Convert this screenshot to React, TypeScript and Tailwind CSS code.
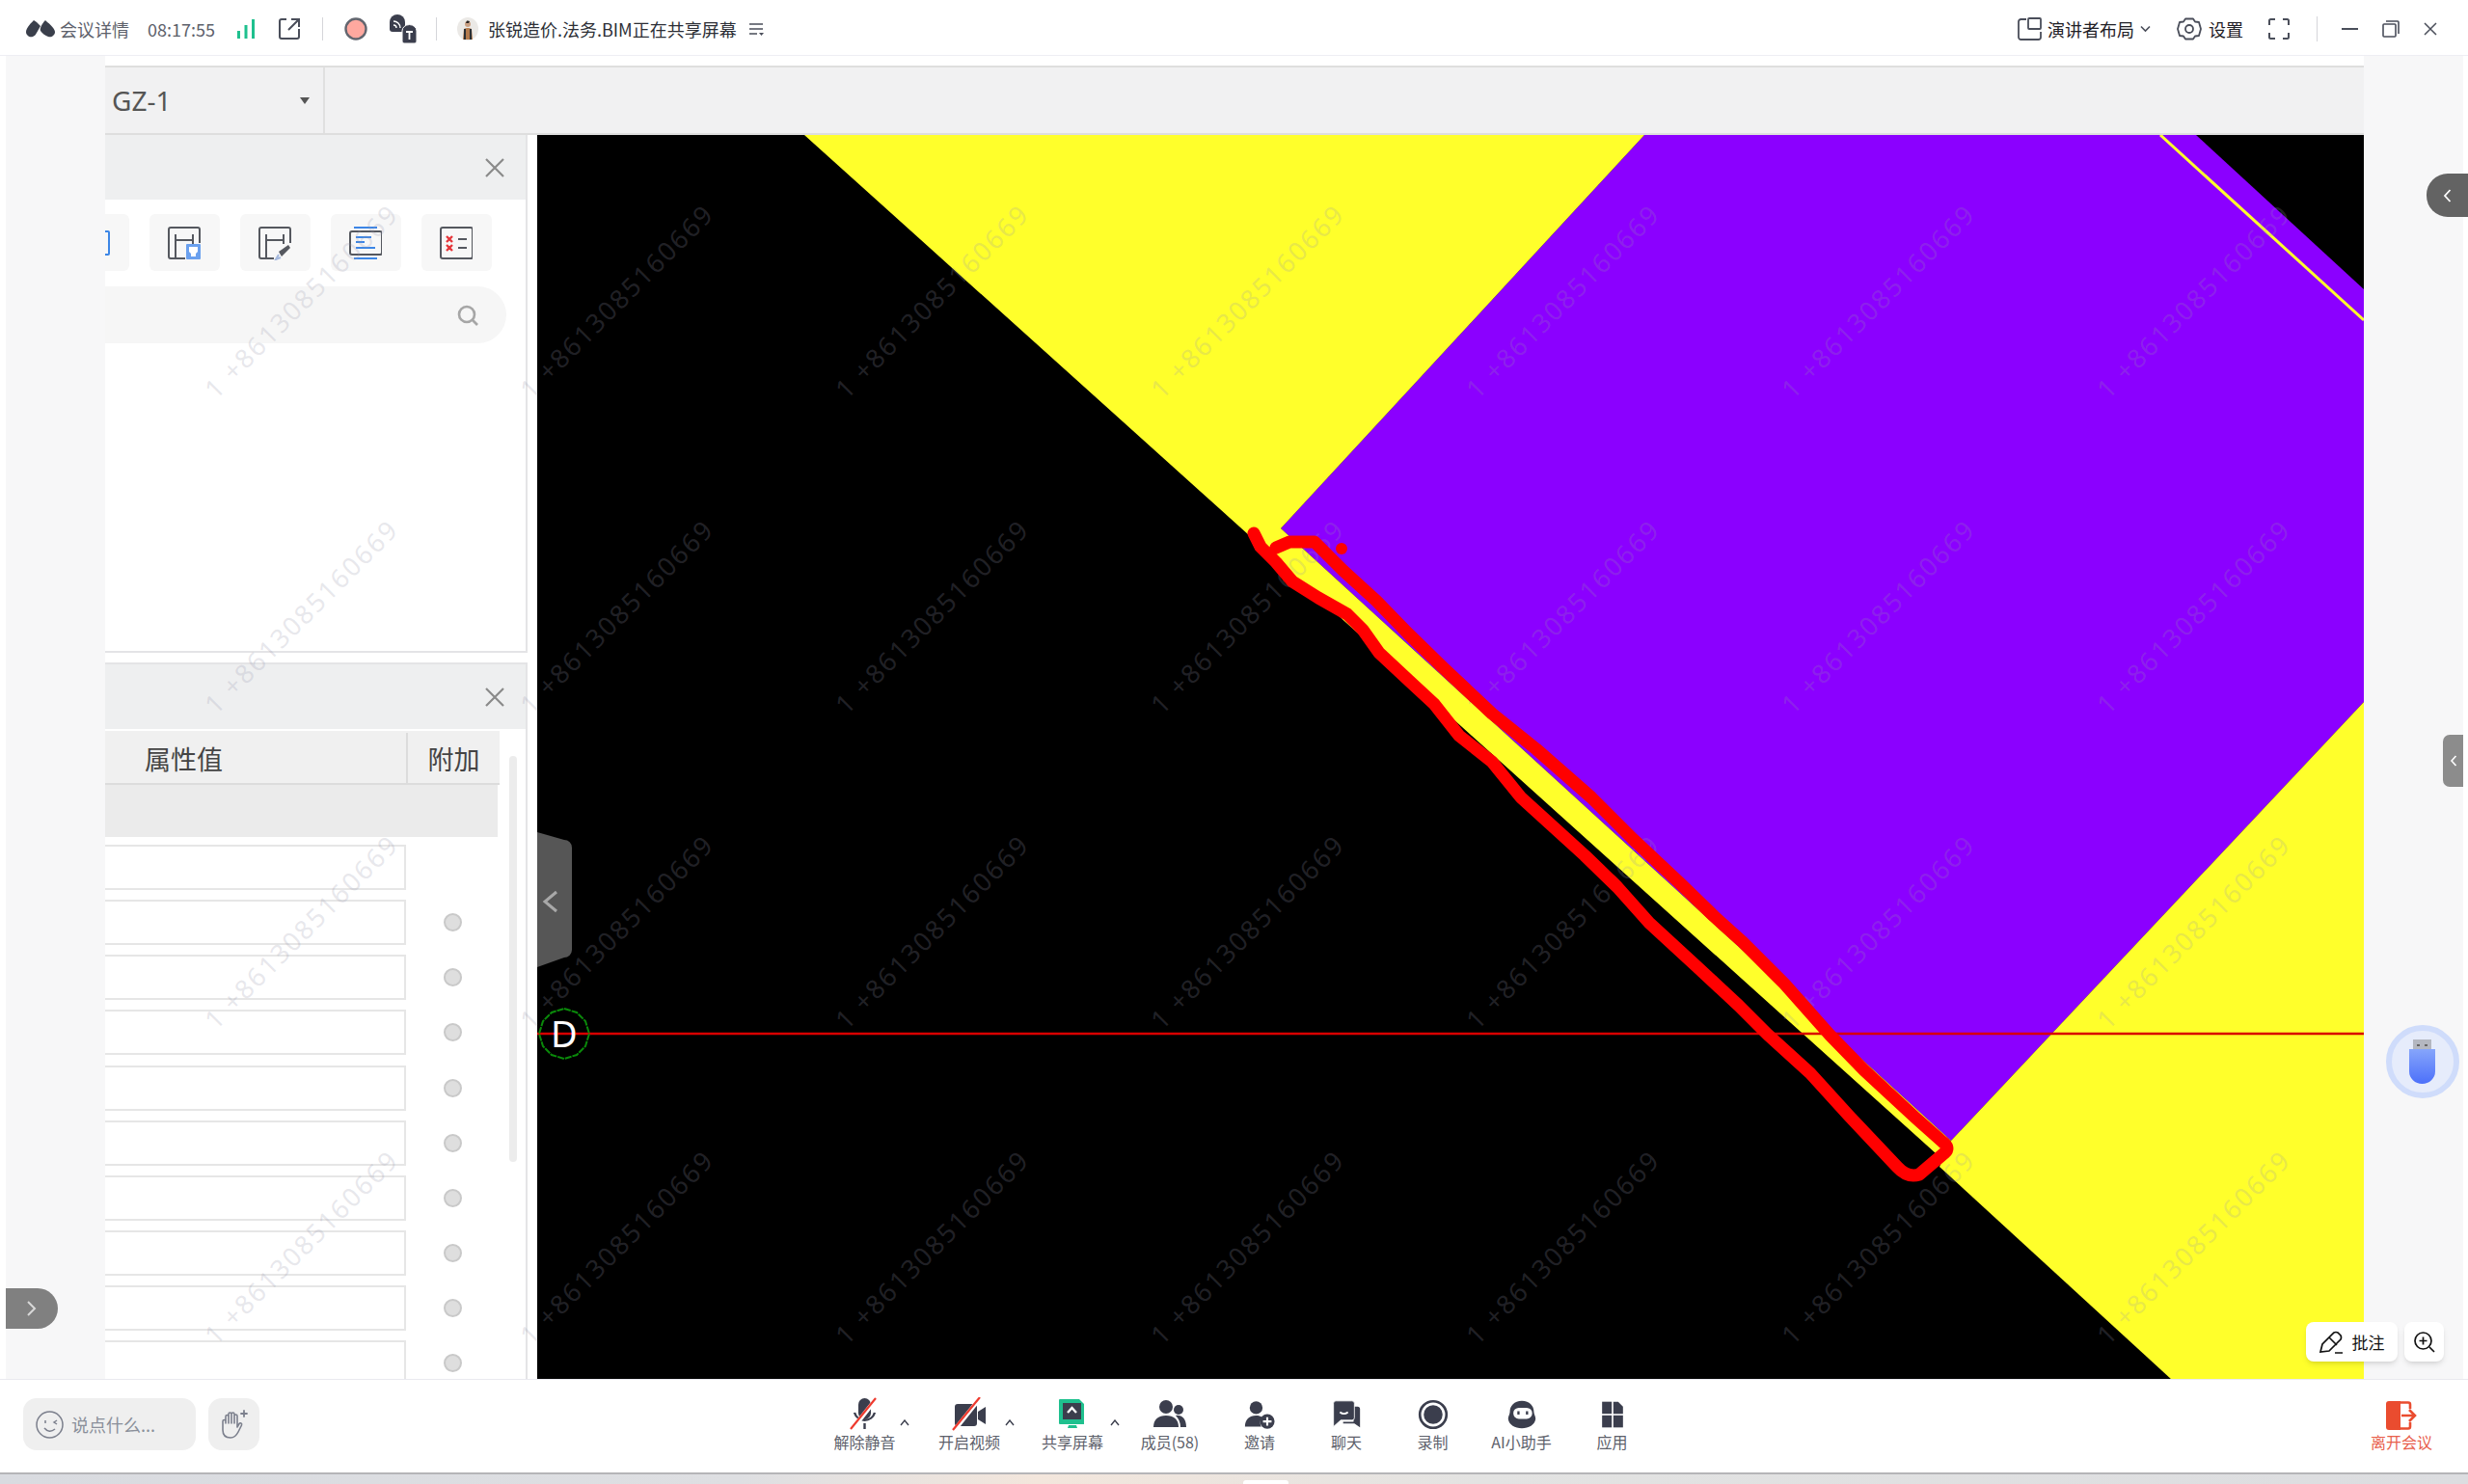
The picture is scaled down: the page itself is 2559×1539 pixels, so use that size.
import React from "react";

const D = "#3b3e4d";

function Logo() {
  return (
    <svg width="32" height="20" viewBox="0 0 32 20">
      <path d="M9 1 C7 3 1 9 1 13 C1 17 5 19 8 18 C10 17 11 16 12 14 L16 7 L12 3 Z" fill="#3a3f4b" />
      <path d="M21 1 C23 3 31 9 31 13 C31 17 27 19 24 18 C21 17 18 15 16 12 C15 10 17 5 21 1 Z" fill="#3a3f4b" />
    </svg>
  );
}

function Signal() {
  return (
    <svg width="20" height="22" viewBox="0 0 20 22" fill="#1fc08e">
      <rect x="1" y="13" width="3" height="8" />
      <rect x="8.5" y="7" width="3" height="14" />
      <rect x="16" y="1" width="3" height="20" />
    </svg>
  );
}

function ExportIcon() {
  return (
    <svg width="24" height="24" viewBox="0 0 24 24" fill="none" stroke="#4a4e5a" strokeWidth="2">
      <path d="M9 2H4a2 2 0 0 0-2 2v16a2 2 0 0 0 2 2h16a2 2 0 0 0 2-2v-8" />
      <path d="M11 13 21 3M14 2h8v8" />
    </svg>
  );
}

function RecordDot() {
  return (
    <svg width="24" height="24" viewBox="0 0 24 24">
      <circle cx="12" cy="12" r="10.5" fill="#ffa89f" stroke="#63666f" strokeWidth="2.4" />
    </svg>
  );
}

function RssT() {
  return (
    <svg width="28" height="30" viewBox="0 0 28 30">
      <path d="M0 8a8 8 0 0 1 16 0v7a3 3 0 0 1-3 3H3a3 3 0 0 1-3-3z" fill="#3b3e4d" />
      <path d="M4 7a7 7 0 0 1 7 7M4 11a3 3 0 0 1 3 3" stroke="#fff" strokeWidth="1.4" fill="none" />
      <path d="M13 17a7 6 0 0 1 15 0v11a2 2 0 0 1-2 2H15a2 2 0 0 1-2-2z" fill="#3b3e4d" stroke="#fff" strokeWidth="1" />
      <path d="M17 18h7M20.500 18v8" stroke="#fff" strokeWidth="1.8" />
    </svg>
  );
}

function Avatar() {
  return (
    <svg width="22" height="24" viewBox="0 0 22 24">
      <ellipse cx="11" cy="12" rx="11" ry="12" fill="#ebe9e6" />
      <circle cx="11" cy="7" r="3" fill="#caa083" />
      <path d="M10 3.500a3 2 0 0 1 3 .5l-1 2H9z" fill="#2a2523" />
      <path d="M6 23 7 12q4-2 8 0l1 11z" fill="#b47a4c" />
      <path d="M7 12h2v11H7zM13 12h2v11h-2z" fill="#2b2f33" />
    </svg>
  );
}

function ListDown() {
  return (
    <svg width="16" height="14" viewBox="0 0 16 14" stroke="#4a4e5a" strokeWidth="1.6" fill="none">
      <path d="M1 2h14M1 7h14M1 12h8" />
      <path d="M11 11h5l-2.500 3z" fill="#4a4e5a" stroke="none" />
    </svg>
  );
}

function LayoutIcon() {
  return (
    <svg width="25" height="24" viewBox="0 0 25 24" fill="none" stroke="#4a4e5a" strokeWidth="1.8">
      <path d="M9 2H3.500A2.500 2.500 0 0 0 1 4.500v16A2.500 2.500 0 0 0 3.500 23h18a2.500 2.500 0 0 0 2.500-2.500V15" />
      <rect x="11" y="1" width="13" height="11" rx="1" />
    </svg>
  );
}

function GearIcon() {
  return (
    <svg width="26" height="26" viewBox="0 0 26 26" fill="none" stroke="#4a4e5a" strokeWidth="1.8">
      <path d="M9 2.500h8l2 3 4 .5 2 7-2 7-4 .5-2 3H9l-2-3-4-.5-2-7 2-7 4-.5z" strokeLinejoin="round" />
      <circle cx="13" cy="13" r="4" />
    </svg>
  );
}

function FullIcon() {
  return (
    <svg width="22" height="22" viewBox="0 0 22 22" fill="none" stroke="#4a4e5a" strokeWidth="2">
      <path d="M7 1H2.500A1.500 1.500 0 0 0 1 2.500V7M15 1h4.500A1.500 1.500 0 0 1 21 2.500V7M7 21H2.500A1.500 1.500 0 0 1 1 19.500V15M15 21h4.500a1.500 1.500 0 0 0 1.500-1.500V15" />
    </svg>
  );
}

function Header() {
  return (
    <header className="flex h-[58px] items-center border-b border-[#eeeef3] bg-white pt-[2px] text-[18px] leading-none">
      <div className="ml-[26px]"><Logo /></div>
      <span className="ml-[4px] text-[#5d616b]">会议详情</span>
      <span className="ml-[19px] text-[#5d616b]">08:17:55</span>
      <div className="ml-[22px]"><Signal /></div>
      <div className="ml-[23px]"><ExportIcon /></div>
      <div className="ml-[22px] h-[24px] w-px bg-[#d5d6da]" />
      <div className="ml-[22px]"><RecordDot /></div>
      <div className="ml-[23px]"><RssT /></div>
      <div className="ml-[20px] h-[24px] w-px bg-[#d5d6da]" />
      <div className="ml-[21px]"><Avatar /></div>
      <span className="ml-[10px] text-[#2d2f36]">张锐造价.法务.BIM正在共享屏幕</span>
      <div className="ml-[12px]"><ListDown /></div>
      <div className="ml-auto"><LayoutIcon /></div>
      <span className="ml-[6px] text-[#1f2026]">演讲者布局</span>
      <svg className="ml-[6px]" width="11" height="8" viewBox="0 0 11 8" fill="none" stroke="#4a4e5a" strokeWidth="1.6"><path d="m1 1.500 4.500 4.500L10 1.500" /></svg>
      <div className="ml-[27px]"><GearIcon /></div>
      <span className="ml-[7px] text-[#1f2026]">设置</span>
      <div className="ml-[26px]"><FullIcon /></div>
      <div className="ml-[28px] h-[26px] w-px bg-[#d5d6da]" />
      <div className="ml-[25px] h-[2px] w-[17px] bg-[#4a4e5a]" />
      <svg className="ml-[25px]" width="18" height="18" viewBox="0 0 18 18" fill="none" stroke="#4a4e5a" strokeWidth="1.6"><rect x="1" y="4" width="13" height="13" rx="1" /><path d="M4 1h12a1 1 0 0 1 1 1v12" /></svg>
      <svg className="ml-[25px] mr-[32px]" width="14" height="14" viewBox="0 0 14 14" fill="none" stroke="#4a4e5a" strokeWidth="1.5"><path d="m1 1 12 12M13 1 1 13" /></svg>
    </header>
  );
}

function ToolIcon1() {
  return (
    <svg width="34" height="36" viewBox="0 0 34 36" fill="none">
      <path d="M18 34H3a2 2 0 0 1-2-2V4a2 2 0 0 1 2-2h28a2 2 0 0 1 2 2v14" stroke="#55585f" strokeWidth="2" />
      <path d="M8 34V9M8 15h18M26 9v10" stroke="#55585f" strokeWidth="2" />
      <rect x="19" y="19" width="15" height="16" rx="1" fill="#6aa0ee" />
      <path d="M22 22h9v5l-2 2v3h-5v-3l-2-2z" fill="#fff" />
    </svg>
  );
}

function ToolIcon2() {
  return (
    <svg width="34" height="36" viewBox="0 0 34 36" fill="none">
      <path d="M16 34H3a2 2 0 0 1-2-2V4a2 2 0 0 1 2-2h28a2 2 0 0 1 2 2v14" stroke="#55585f" strokeWidth="2" />
      <path d="M8 34V9M8 15h18M26 9v10" stroke="#55585f" strokeWidth="2" />
      <path d="M21 27 31 20l2 3-9 9z" fill="#55585f" />
      <path d="m21 30-3 5 5-2" stroke="#a4b8dd" strokeWidth="2" />
    </svg>
  );
}

function ToolIcon3() {
  return (
    <svg width="34" height="36" viewBox="0 0 34 36" fill="none">
      <path d="M5 2h24M5 34h24" stroke="#3c86e6" strokeWidth="2" />
      <rect x="1" y="6" width="33" height="24" rx="2" stroke="#55585f" strokeWidth="2" />
      <path d="M7 12h16M7 17h9M7 23h20" stroke="#3c86e6" strokeWidth="2" />
    </svg>
  );
}

function ToolIcon4() {
  return (
    <svg width="34" height="36" viewBox="0 0 34 36" fill="none">
      <rect x="1" y="2" width="33" height="32" rx="2" stroke="#55585f" strokeWidth="2" />
      <path d="m7 11 6 6M13 11l-6 6M7 20l6 6M13 20l-6 6" stroke="#e5363a" strokeWidth="2.400" />
      <path d="M19 14h9M19 23h9" stroke="#55585f" strokeWidth="2" />
    </svg>
  );
}

function CloseX() {
  return (
    <svg width="20" height="20" viewBox="0 0 20 20" fill="none" stroke="#8a8a8a" strokeWidth="2.200"><path d="m1 1 18 18M19 1 1 19" /></svg>
  );
}

const rows = [false, true, true, true, true, true, true, true, true, true];

function SidePanels() {
  return (
    <div className="h-full w-[448px] shrink-0 bg-white pr-[10px]">
      <section className="h-[537px] border-r-2 border-b-2 border-[#e4e4e6]">
        <div className="flex h-[67px] items-center justify-end bg-[#eeeff0] pr-[22px]"><CloseX /></div>
        <div className="mt-[15px] flex h-[59px] gap-[21px]">
          <div className="flex w-[25px] items-center justify-start rounded-r-md bg-[#f7f7f7]">
            <svg width="5" height="26" viewBox="0 0 5 26" fill="none" stroke="#3c86e6" strokeWidth="2"><path d="M0 1h3a1 1 0 0 1 1 1v22a1 1 0 0 1-1 1H0" /></svg>
          </div>
          <div className="flex w-[73px] items-center justify-center rounded-md bg-[#f7f7f7] pr-[2px]"><ToolIcon1 /></div>
          <div className="flex w-[73px] items-center justify-center rounded-md bg-[#f7f7f7] pr-[2px]"><ToolIcon2 /></div>
          <div className="flex w-[73px] items-center justify-center rounded-md bg-[#f7f7f7] pr-[2px]"><ToolIcon3 /></div>
          <div className="flex w-[73px] items-center justify-center rounded-md bg-[#f7f7f7] pr-[2px]"><ToolIcon4 /></div>
        </div>
        <div className="mt-[16px] flex h-[59px] w-[416px] items-center justify-end rounded-r-[30px] bg-[#f6f6f6] pr-[29px]">
          <svg width="22" height="22" viewBox="0 0 22 22" fill="none" stroke="#a6a6a6" strokeWidth="2.600"><circle cx="10" cy="10" r="8" /><path d="m16 16 5 5" /></svg>
        </div>
      </section>
      <section className="mt-[10px] h-[760px] border-t-2 border-r-2 border-[#e4e4e6]">
        <div className="flex h-[67px] items-center justify-end bg-[#eeeff0] pr-[22px]"><CloseX /></div>
        <div className="mt-[2px] flex">
          <div className="w-[409px]">
            <div className="flex h-[56px] border-b-2 border-[#dcdcdc] bg-[#f0f0f0] pt-[2px] text-[27px] leading-none text-[#444]">
              <div className="flex flex-1 items-center border-r-2 border-[#dcdcdc] pl-[41px]">属性值</div>
              <div className="flex w-[95px] items-center justify-center">附加</div>
            </div>
            <div className="mb-[8px] h-[54px] w-[407px] bg-[#ebebeb]" />
            {rows.map((radio, i) => (
              <div key={i} className="mb-[10.150px] flex h-[47px]">
                <div className="w-[312px] border-y-2 border-r-2 border-[#e6e6e6] bg-white" />
                {radio && (
                  <div className="flex flex-1 items-center justify-center">
                    <div className="h-[19px] w-[19px] rounded-full border-2 border-[#c9c9c9] bg-[#dedede]" />
                  </div>
                )}
              </div>
            ))}
          </div>
          <div className="ml-[10px] mt-[26px] h-[421px] w-[8px] rounded-full bg-[#ececec]" />
        </div>
      </section>
    </div>
  );
}

function CadCanvas() {
  return (
    <div className="relative h-full w-[1894px] bg-black">
      <svg className="block h-full w-full" viewBox="557 140 1894 1291" shapeRendering="geometricPrecision">
        <rect x="557" y="140" width="1894" height="1291" fill="#000" />
        <polygon points="1705,140 2277,140 2451,300 2451,728 2023,1183 1328,548" fill="#8b00ff" />
        <polygon points="834,140 1705,140 1328,548 2023,1183 2007,1196" fill="#ffff2b" />
        <polygon points="2023,1183 2451,728 2451,1431 2252,1431 2011,1210" fill="#ffff2b" />
        <line x1="2240" y1="140" x2="2451" y2="332" stroke="#ffff2b" strokeWidth="3" />
        <line x1="557" y1="1072" x2="2451" y2="1072" stroke="#d80000" strokeWidth="2.500" />
        <polygon points="585,1046 598,1050 607,1059 611,1072 607,1085 598,1094 585,1098 572,1094 563,1085 559,1072 563,1059 572,1050" fill="none" stroke="#0a8a0a" strokeWidth="2" strokeDasharray="7 1" />
      </svg>
      <span className="absolute left-[14px] top-[912px] text-[38px] leading-[38px] text-white [font-family:'Noto_Sans',sans-serif]">D</span>
      <svg className="absolute left-0 top-[723px]" width="36" height="140" viewBox="0 0 36 140">
        <path d="M0 0 28 8a8 8 0 0 1 8 8v106a8 8 0 0 1-8 8L0 140z" fill="#565656" />
        <path d="M20 62 8 72l12 10" fill="none" stroke="#a8a8a8" strokeWidth="3" />
      </svg>
    </div>
  );
}

const wmX = [312, 639, 966, 1293, 1620, 1947, 2274];
const wmY = [312, 639, 966, 1293];

function Watermarks() {
  return (
    <div className="pointer-events-none absolute left-[109px] top-[58px] h-[1373px] w-[2342px] overflow-hidden">
      {wmX.flatMap((x) =>
        wmY.map((y) => (
          <span
            key={`${x}-${y}`}
            className="absolute -translate-x-1/2 -translate-y-1/2 -rotate-45 whitespace-nowrap text-[27px] leading-none tracking-[2px] text-[rgba(150,150,172,0.23)] [font-family:'Noto_Sans',sans-serif]"
            style={{ left: x - 109, top: y - 58 }}
          >
            1 +8613085160669
          </span>
        ))
      )}
    </div>
  );
}

function Annotation() {
  const d =
    "M1300 553 L1307 567 L1323 583 L1340 603 L1367 620 L1397 637 L1413 653 L1430 677 L1460 705 L1487 730 L1513 763 L1547 790 L1577 827 L1610 857 L1643 887 L1677 920 L1710 957 L1760 1003 L1803 1043 L1833 1073 L1877 1113 L1917 1157 L1967 1210 Q1978 1222 1990 1218 L2017 1195 Q2022 1190 2014 1184 L1987 1160 L1933 1110 L1897 1073 L1850 1020 L1807 977 L1777 950 L1743 917 L1693 870 L1650 827 L1593 777 L1547 740 L1497 693 L1460 657 L1427 623 L1393 592 L1363 562 L1337 562 L1323 568";
  return (
    <svg className="pointer-events-none absolute left-[557px] top-[140px]" width="1894" height="1291" viewBox="557 140 1894 1291">
      <path d={d} fill="none" stroke="#ff0000" strokeWidth="13" strokeLinecap="round" strokeLinejoin="round" />
      <circle cx="1391" cy="569" r="6" fill="#ff0000" />
    </svg>
  );
}

function MicIcon() {
  return (
    <svg width="36" height="36" viewBox="0 0 36 36">
      <rect x="11" y="1" width="13" height="22" rx="6.500" fill={D} />
      <path d="M7 16a11 11 0 0 0 21 0M17.500 27v6" fill="none" stroke={D} strokeWidth="2.400" />
      <path d="M30 1 4 34" stroke="#fff" strokeWidth="4.500" />
      <path d="M29 1 3 33" stroke="#ee3a2e" strokeWidth="2.200" />
    </svg>
  );
}
function VideoIcon() {
  return (
    <svg width="36" height="36" viewBox="0 0 36 36">
      <rect x="3" y="7" width="23" height="23" rx="3" fill={D} />
      <path d="M27 15l8-5v18l-8-5z" fill={D} />
      <path d="M30 0 2 35" stroke="#fff" strokeWidth="4.500" />
      <path d="M29 0 1 34" stroke="#ee3a2e" strokeWidth="2.200" />
    </svg>
  );
}
function ShareIcon() {
  return (
    <svg width="36" height="36" viewBox="0 0 36 36">
      <path d="M5 2h20l5 5v21H5a1 1 0 0 1-1-1V3a1 1 0 0 1 1-1z" fill="#1fc08e" />
      <rect x="8" y="6" width="19" height="17" fill={D} />
      <path d="m13 16 4.500-5 4.500 5" fill="none" stroke="#fff" strokeWidth="2.400" />
      <path d="M14 29h8l1 3H13z" fill="#1fc08e" />
    </svg>
  );
}
function MembersIcon() {
  return (
    <svg width="36" height="36" viewBox="0 0 36 36" fill={D}>
      <circle cx="14" cy="10" r="7" />
      <path d="M1 31c0-8 5-12 13-12s13 4 13 12z" />
      <circle cx="27" cy="13" r="5" />
      <path d="M24 19c6-1 11 3 11 12h-6c0-5-2-9-5-12z" />
    </svg>
  );
}
function InviteIcon() {
  return (
    <svg width="32" height="34" viewBox="0 0 36 36" fill={D}>
      <circle cx="14" cy="10" r="7.500" />
      <path d="M1 32c0-8 5-13 13-13 3 0 5 .5 7 2a10 10 0 0 0-1 11z" />
      <circle cx="27" cy="26" r="8.500" />
      <path d="M27 21v10M22 26h10" stroke="#fff" strokeWidth="2.400" />
    </svg>
  );
}
function ChatIcon() {
  return (
    <svg width="30" height="34" viewBox="0 0 36 36">
      <path d="M27 8h5a3 3 0 0 1 3 3v23l-7-5H14v-2h13z" fill={D} />
      <path d="M5 1h20a3 3 0 0 1 3 3v18a3 3 0 0 1-3 3H11l-9 8V4a3 3 0 0 1 3-3z" fill={D} stroke="#fff" strokeWidth="1" />
      <path d="M10 15q5 4 10 0" fill="none" stroke="#fff" strokeWidth="2.200" />
    </svg>
  );
}
function RecordIcon() {
  return (
    <svg width="32" height="34" viewBox="0 0 36 36">
      <circle cx="18" cy="18" r="15.500" fill="none" stroke={D} strokeWidth="3" />
      <circle cx="18" cy="18" r="11" fill={D} />
    </svg>
  );
}
function AiIcon() {
  return (
    <svg width="32" height="34" viewBox="0 0 36 36">
      <path d="M18 2c9 0 14 6 14 13 0 3 2 5 2 8-1 7-8 11-16 11S3 30 2 23c0-3 2-5 2-8C4 8 9 2 18 2z" fill={D} />
      <rect x="8" y="10" width="22" height="13" rx="6.500" fill="#fff" />
      <path d="M14 14v4M24 14v4" stroke={D} strokeWidth="2.600" />
    </svg>
  );
}
function AppsIcon() {
  return (
    <svg width="30" height="34" viewBox="0 0 36 36" fill={D}>
      <rect x="5" y="2" width="12" height="15" />
      <path d="M19 2h6l6 6v9H19z" />
      <rect x="5" y="19" width="12" height="15" />
      <rect x="19" y="19" width="12" height="15" />
    </svg>
  );
}

function Caret({ cls }: { cls: string }) {
  return (
    <svg className={`absolute top-[41px] ${cls}`} width="10" height="7" viewBox="0 0 10 7" fill="none" stroke="#3b3e4d" strokeWidth="1.400">
      <path d="m1 6 4-5 4 5" />
    </svg>
  );
}

function Item({ w, icon, label, caret }: { w: string; icon: React.ReactNode; label: string; caret?: string }) {
  return (
    <div className={`relative flex shrink-0 flex-col items-center pt-[18px] ${w}`}>
      <div className="flex h-[36px] items-center">{icon}</div>
      <span className="mt-[1px] whitespace-nowrap text-[16px] leading-[18px] text-[#5d616b]">{label}</span>
      {caret && <Caret cls={caret} />}
    </div>
  );
}

function BottomBar() {
  return (
    <footer className="flex h-[98px] shrink-0 border-b-2 border-[#b5b5b8] bg-white">
      <div className="flex w-[842px] shrink-0 gap-[13px] pl-[24px] pt-[19px]">
        <div className="flex h-[54px] w-[179px] items-center rounded-[14px] bg-[#efefef] pl-[13px]">
          <svg width="29" height="29" viewBox="0 0 29 29" fill="none" stroke="#7b7f8c" strokeWidth="1.500">
            <circle cx="14.500" cy="14.500" r="13.500" />
            <path d="M10 10v3M22 10l-3 2 3 2M9 18q5 6 11 1" />
          </svg>
          <span className="ml-[8px] text-[18px] leading-none text-[#8a8f9a]">说点什么...</span>
        </div>
        <div className="flex h-[54px] w-[53px] items-center justify-center rounded-[14px] bg-[#efefef]">
          <svg width="30" height="30" viewBox="0 0 30 30" fill="none" stroke="#7b7f8c" strokeWidth="1.600" strokeLinecap="round" strokeLinejoin="round">
            <path d="M3 12v9c0 5 3 8 8 8 4 0 6-2 8-6l3.500-7c.8-2-1.500-3-2.500-1.500L18 18V6.500a1.500 1.500 0 0 0-3 0M15 14V4.500a1.500 1.500 0 0 0-3 0V14M12 14V4.500a1.500 1.500 0 0 0-3 0V14M9 14V7a1.500 1.500 0 0 0-3 0v7M6 14v-2a1.500 1.500 0 0 0-3 0" />
            <path d="M25 1v6M22 4h6" strokeWidth="1.800" />
          </svg>
        </div>
      </div>
      <Item w="w-[109px]" icon={<MicIcon />} label="解除静音" caret="left-[91px]" />
      <Item w="w-[108px]" icon={<VideoIcon />} label="开启视频" caret="left-[91px]" />
      <Item w="w-[106px]" icon={<ShareIcon />} label="共享屏幕" caret="left-[92px]" />
      <Item w="w-[96px]" icon={<MembersIcon />} label="成员(58)" />
      <Item w="w-[90px]" icon={<InviteIcon />} label="邀请" />
      <Item w="w-[90px]" icon={<ChatIcon />} label="聊天" />
      <Item w="w-[89px]" icon={<RecordIcon />} label="录制" />
      <Item w="w-[95px]" icon={<AiIcon />} label="AI小助手" />
      <Item w="w-[93px]" icon={<AppsIcon />} label="应用" />
      <div className="ml-auto mr-[28px] flex w-[82px] flex-col items-center pt-[22px]">
        <svg width="32" height="30" viewBox="0 0 32 30">
          <path d="M3 0h12v30H3a3 3 0 0 1-3-3V3a3 3 0 0 1 3-3z" fill="#ea4c2f" />
          <path d="M14 1.500h9a2 2 0 0 1 2 2V8M14 28.500h9a2 2 0 0 0 2-2V22" fill="none" stroke="#ea4c2f" strokeWidth="2.600" />
          <path d="M16 15h13M24 9l6 6-6 6" fill="none" stroke="#ea4c2f" strokeWidth="2.600" />
        </svg>
        <span className="mt-[3px] whitespace-nowrap text-[16px] leading-[18px] text-[#e8604c]">离开会议</span>
      </div>
    </footer>
  );
}

function Floating() {
  return (
    <>
      <div className="absolute left-[6px] top-[1336px] flex h-[42px] w-[54px] items-center justify-center rounded-r-[21px] bg-[#808080]">
        <svg width="10" height="16" viewBox="0 0 10 16" fill="none" stroke="#d8d8d8" strokeWidth="2"><path d="m1 1 7 7-7 7" /></svg>
      </div>
      <div className="absolute left-[2516px] top-[180px] flex h-[45px] w-[43px] items-center justify-center rounded-l-[22px] bg-[#636363]">
        <svg width="9" height="14" viewBox="0 0 9 14" fill="none" stroke="#fff" strokeWidth="1.800"><path d="M7.500 1 2 7l5.500 6" /></svg>
      </div>
      <div className="absolute left-[2533px] top-[762px] flex h-[54px] w-[21px] items-center justify-center rounded-l-[7px] bg-[#8c8c8c]">
        <svg width="8" height="12" viewBox="0 0 8 12" fill="none" stroke="#fff" strokeWidth="1.600"><path d="M6.500 1 2 6l4.500 5" /></svg>
      </div>
      <div className="absolute left-[2474px] top-[1063px] flex h-[76px] w-[76px] items-center justify-center rounded-full border-[6px] border-[#cfdcfb] bg-[#e6ecfb]">
        <svg width="30" height="46" viewBox="0 0 30 46">
          <defs>
            <linearGradient id="usb" x1="0" y1="0" x2="0" y2="1">
              <stop offset="0" stopColor="#86a5fb" />
              <stop offset="1" stopColor="#4c70fa" />
            </linearGradient>
          </defs>
          <rect x="5" y="0" width="19" height="11" fill="#b4b7c0" />
          <rect x="9" y="5" width="3" height="2" fill="#666" />
          <rect x="17" y="5" width="3" height="2" fill="#666" />
          <path d="M1 10h27v23a13.500 13 0 0 1-27 0z" fill="url(#usb)" />
        </svg>
      </div>
      <div className="absolute left-[2391px] top-[1371px] flex h-[41px] w-[95px] items-center justify-center gap-[8px] rounded-[8px] bg-white shadow-md">
        <svg width="26" height="24" viewBox="0 0 26 24" fill="none" stroke="#111" strokeWidth="1.700"><path d="M1 22 3 14 15 2q2-1 4 0l3 3q1 2 0 4L10 21zM10 7l8 8M16 23h8" /></svg>
        <span className="text-[17px] leading-none text-[#111]">批注</span>
      </div>
      <div className="absolute left-[2493px] top-[1371px] flex h-[41px] w-[41px] items-center justify-center rounded-[8px] bg-white shadow-md">
        <svg width="22" height="22" viewBox="0 0 22 22" fill="none" stroke="#111" strokeWidth="1.700"><circle cx="9.500" cy="9.500" r="8.500" /><path d="m16 16 5 5M9.500 5.500v8M5.500 9.500h8" /></svg>
      </div>
    </>
  );
}

export default function App() {
  return (
    <div className="relative flex h-[1539px] w-[2559px] flex-col overflow-hidden bg-white font-['Noto_Sans_CJK_SC','Noto_Sans',sans-serif]">
      <Header />
      <main className="flex h-[1373px] shrink-0 overflow-hidden border-b border-[#e9e9ef] pl-[6px] pr-[5px]">
        <div className="w-[103px] shrink-0 bg-[#f7f7f8]" />
        <div className="flex w-[2342px] shrink-0 flex-col bg-white">
          <div className="h-[10px] shrink-0" />
          <div className="flex h-[72px] shrink-0 border-y-2 border-[#dedede] bg-[#f1f1f2]">
            <div className="flex w-[228px] items-center border-r-2 border-[#e0e0e0] pl-[7px] pr-[14px]">
              <span className="text-[28px] leading-none text-[#555] [font-family:'Noto_Sans',sans-serif]">GZ-1</span>
              <svg className="ml-auto" width="10" height="7" viewBox="0 0 10 7"><path d="M0 0h10L5 7z" fill="#555" /></svg>
            </div>
          </div>
          <div className="flex h-[1291px] shrink-0">
            <SidePanels />
            <CadCanvas />
          </div>
        </div>
        <div className="w-[103px] shrink-0 bg-[#f7f7f8]" />
      </main>
      <Watermarks />
      <Annotation />
      <BottomBar />
      <div className="relative flex-1 bg-[linear-gradient(90deg,#d9dbe0_0%,#dedfe2_30%,#f3e6dc_42%,#e3e3e2_60%,#dcdde0_100%)]">
        <div className="absolute left-[1289px] top-[6px] h-[6px] w-[47px] rounded-t-[3px] bg-white" />
      </div>
      <Floating />
    </div>
  );
}
